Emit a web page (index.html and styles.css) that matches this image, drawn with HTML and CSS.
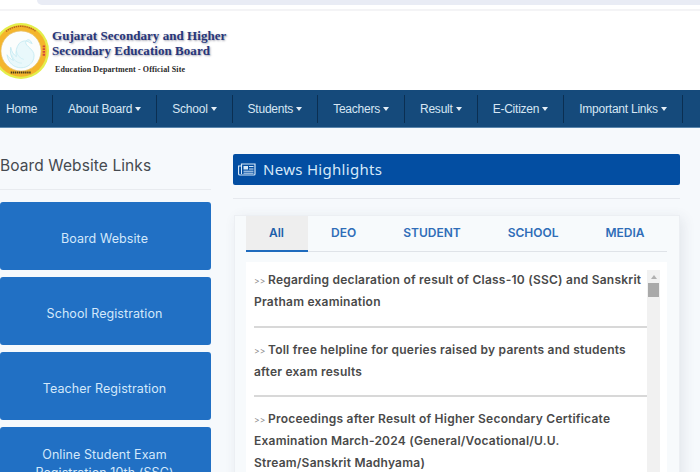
FILE: index.html
```html
<!DOCTYPE html>
<html lang="en">
<head>
<meta charset="utf-8">
<title>Gujarat Secondary and Higher Secondary Education Board</title>
<link rel="stylesheet" href="styles.css">
</head>
<body>
<div class="topbar"><div class="topbar-pill"></div></div>
<header class="brand">
  <svg class="logo" viewBox="0 0 60 60" width="56" height="56" aria-hidden="true">
    <circle cx="30" cy="30" r="30" fill="#e4ee4a"/>
    <circle cx="30" cy="30" r="27.500" fill="#f4b52c"/>
    <circle cx="30" cy="30" r="21.500" fill="#fbfdfc"/>
    <circle cx="30" cy="30" r="21.500" fill="none" stroke="#e8c06a" stroke-width="0.800"/>
    <path d="M40 19c-2-2-5-1-5 2 0 4 9 7 9 14 0 8-7 13-14 13-8 0-14-6-15-14 2 3 4 5 7 6-3-4-4-9-3-14 1 5 3 8 6 10-1-5 0-10 3-14 3-3 8-4 11-1l3 1z" fill="#e9f8fb" stroke="#bde7f0" stroke-width="0.800"/>
    <path d="M20 34c2 6 6 9 11 9M25 30c1 5 4 8 8 9" fill="none" stroke="#c6ebf3" stroke-width="0.700"/>
    <path d="M5.500 24v12M54.500 24v12" stroke="#d2483a" stroke-width="2.500" stroke-dasharray="2 1"/>
    <path d="M19 53h22" stroke="#4a3a1a" stroke-width="2" stroke-dasharray="1.500 .7"/>
    <path d="M14 9a26 26 0 0 1 32 0" fill="none" stroke="#b5651d" stroke-width="1.600" stroke-dasharray="1.500 .8"/>
  </svg>
  <div class="brand-text">
    <div class="brand-name">Gujarat Secondary and Higher<br>Secondary Education Board</div>
    <div class="brand-sub">Education Department - Official Site</div>
  </div>
</header>
<nav class="nav">
  <a class="nav-item">Home</a>
  <a class="nav-item drop">About Board</a>
  <a class="nav-item drop">School</a>
  <a class="nav-item drop">Students</a>
  <a class="nav-item drop">Teachers</a>
  <a class="nav-item drop">Result</a>
  <a class="nav-item drop">E-Citizen</a>
  <a class="nav-item drop">Important Links</a>
</nav>
<main class="main">
  <aside class="side">
    <h2 class="side-title">Board Website Links</h2>
    <a class="side-btn">Board Website</a>
    <a class="side-btn">School Registration</a>
    <a class="side-btn">Teacher Registration</a>
    <a class="side-btn">Online Student Exam Registration 10th (SSC)</a>
  </aside>
  <section class="content">
    <h2 class="banner">
      <svg class="banner-icon" viewBox="0 0 18 13" width="18" height="13" aria-hidden="true">
        <path d="M3.500 1h13.500v10a1 1 0 0 1-1 1H2a1.500 1.500 0 0 1-1.500-1.500V3H3.500z" fill="none" stroke="#d6e8f8" stroke-width="1.200"/>
        <path d="M3.500 3v8" stroke="#d6e8f8" stroke-width="1"/>
        <rect x="5.500" y="3" width="4.500" height="3.500" fill="#d6e8f8"/>
        <path d="M11 3.500h4.500M11 6h4.500M5.500 8.200h10M5.500 10.200h10" stroke="#d6e8f8" stroke-width="1"/>
      </svg>
      News Highlights
    </h2>
    <div class="rule"></div>
    <div class="card">
      <div class="tabs">
        <a class="tab tab-active">All</a>
        <a class="tab tab-deo">DEO</a>
        <a class="tab tab-student">STUDENT</a>
        <a class="tab tab-school">SCHOOL</a>
        <a class="tab tab-media">MEDIA</a>
      </div>
      <div class="list-wrap">
        <ul class="list">
          <li class="news"><span class="mark">&gt;&gt;</span> Regarding declaration of result of Class-10 (SSC) and Sanskrit Pratham examination</li>
          <li class="news"><span class="mark">&gt;&gt;</span> Toll free helpline for queries raised by parents and students after exam results</li>
          <li class="news"><span class="mark">&gt;&gt;</span> Proceedings after Result of Higher Secondary Certificate Examination March-2024 (General/Vocational/U.U. Stream/Sanskrit Madhyama)</li>
        </ul>
        <div class="scroll">
          <div class="scroll-up"></div>
          <div class="scroll-thumb"></div>
        </div>
      </div>
    </div>
  </section>
</main>
</body>
</html>
```
FILE: styles.css
```css
* { box-sizing: border-box; }
html, body { margin: 0; height: 472px; overflow: hidden; }
body { background: #f6f9fc; font-family: "Liberation Sans", Arial, sans-serif; }

.topbar { height: 11px; background: #fff; border-bottom: 2px solid #f4f4f6; padding-left: 37px; }
.topbar-pill { height: 5px; background: #e9ecf5; border-radius: 0 0 0 6px; }

.brand { height: 79px; background: #fff; display: flex; overflow: hidden; padding-top: 12px; }
.logo { flex: none; margin-left: -7px; margin-right: 3px; }
.brand-text { padding-top: 5px; }
.brand-name { font: bold 13px/15px "Liberation Serif", serif; color: #27367a; text-shadow: 1px 1px 2px #a6a6b2; letter-spacing: .05px; }
.brand-sub { font: bold 8px/10px "Liberation Serif", serif; color: #2a2a2a; margin: 7px 0 0 3px; letter-spacing: .12px; }

.nav { height: 38px; background: #154a7b; border-bottom: 1px solid #5a86ad; display: flex; padding-top: 5px; overflow: hidden; }
.nav-item { flex: none; height: 28px; padding: 0 15px; border-right: 1px solid #0b2f52; color: #d6e6f4; font-size: 12px; line-height: 28px; letter-spacing: -.23px; display: flex; align-items: center; }
.nav-item:first-child { margin-left: -9px; }
.drop::after { content: ""; margin-left: 3px; border-top: 4px solid #e4eef7; border-left: 3.500px solid transparent; border-right: 3.500px solid transparent; }

.main { display: grid; grid-template-columns: 211px 447px; column-gap: 22px; padding-top: 26px; }

.side-title { margin: 0; height: 36px; border-bottom: 1px solid #e8ebef; font: 400 15.500px/24px "Inter", sans-serif; color: #454a50; letter-spacing: .1px; white-space: nowrap; }
.side-btn { display: flex; align-items: center; justify-content: center; text-align: center; height: 68px; margin-top: 7px; padding: 5px 32px 0 30px; background: #2170c4; border-radius: 3px; color: #d3e8fb; font: 400 12.500px/18px "Inter", sans-serif; letter-spacing: .08px; }
.side-title + .side-btn { margin-top: 12px; }

.banner { display: flex; align-items: center; gap: 7px; height: 31px; margin: 0; padding-left: 5px; background: #034ea2; border-radius: 2px; color: #d6e8f8; font: 400 15px/31px "Noto Sans", sans-serif; letter-spacing: .3px; }
.banner-icon { flex: none; }
.rule { height: 1px; margin-top: 13px; background: #e6e9ee; }

.card { margin: 16px 0 0 1px; height: 300px; padding: 0 12px 0 11px; background: #f7fafc; border: 1px solid #eceff3; box-shadow: 3px 3px 12px rgba(60, 70, 90, .1); }
.tabs { display: flex; height: 36px; border-bottom: 1px solid #dfe3e8; }
.tab { height: 36px; font: 600 12px/33px "Inter", sans-serif; color: #2f6db8; text-align: center; }
.tab-active { width: 62px; padding-right: 1px; background: #eeeeee; color: #1d5eaa; border-bottom: 2px solid #1f6bbd; }
.tab-deo { margin-left: 23px; }
.tab-student { margin-left: 47px; }
.tab-school { margin-left: 47px; }
.tab-media { margin-left: 47px; }

.list-wrap { display: flex; align-items: flex-start; height: 260px; margin-top: 10px; padding: 7px 8px 0; background: #fff; }
.list { flex: 0 0 393px; list-style: none; margin: 0; padding: 0; }
.news { padding-bottom: 12.500px; margin-bottom: 11px; border-bottom: 2px solid #d8d8d8; font: 600 12px/22px "Inter", sans-serif; color: #4a4a4a; letter-spacing: .23px; }
.news:last-child { border-bottom: 0; }
.mark { font-weight: 400; font-size: 8.500px; line-height: 1; margin-right: -1px; color: #8a8a8a; }
.scroll { flex: none; width: 13px; height: 220px; margin-top: 1px; background: #f1f1f1; padding: 5px 1px 0; }
.scroll-up { width: 0; height: 0; margin: 0 auto 4px; border-bottom: 4px solid #b0b0b0; border-left: 3px solid transparent; border-right: 3px solid transparent; }
.scroll-thumb { width: 11px; height: 14px; background: #a9a9a9; }
```
